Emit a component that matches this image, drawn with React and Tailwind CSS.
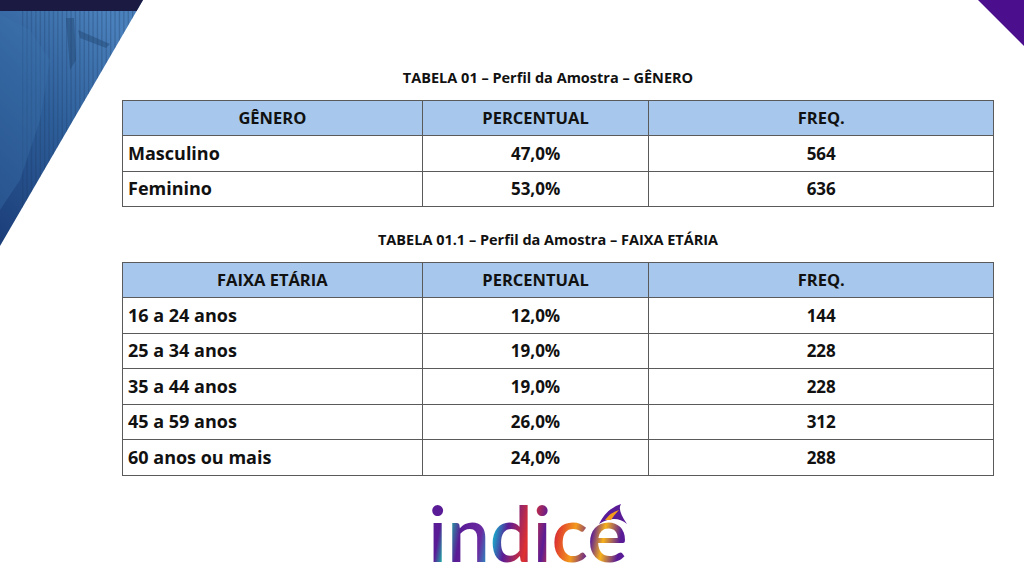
import React from "react";

const font = { fontFamily: '"Open Sans", "Noto Sans", sans-serif' };

function Table({ head, rows }) {
  return (
    <table className="w-[872px] border-collapse text-[#111]" style={font}>
      <colgroup>
        <col className="w-[300px]" />
        <col className="w-[227px]" />
        <col className="w-[345px]" />
      </colgroup>
      <thead>
        <tr className="bg-[#a7c8ec] h-[35px]">
          {head.map((h) => (
            <th key={h} className="border border-[#5a5a5a] text-[16.5px] font-bold text-center p-0">
              {h}
            </th>
          ))}
        </tr>
      </thead>
      <tbody>
        {rows.map((r) => (
          <tr key={r[0]} className="h-[35.5px]">
            <td className="border border-[#5a5a5a] text-[18px] font-bold pl-[5px] p-0">{r[0]}</td>
            <td className="border border-[#5a5a5a] text-[17px] font-bold text-center p-0">{r[1]}</td>
            <td className="border border-[#5a5a5a] text-[17px] font-bold text-center p-0">{r[2]}</td>
          </tr>
        ))}
      </tbody>
    </table>
  );
}

function LeftPhoto() {
  const stripes = [];
  for (let i = 0; i < 28; i++) {
    stripes.push(
      <rect key={i} x={22 + i * 4.4} y="10" width="1.3" height="240" fill="#1d3c66" opacity="0.3" />
    );
  }
  return (
    <svg className="absolute left-0 top-0" width="150" height="250" viewBox="0 0 150 250">
      <defs>
        <linearGradient id="pg" x1="0.6" y1="0" x2="0" y2="1">
          <stop offset="0" stopColor="#4a80bb" />
          <stop offset="0.45" stopColor="#2e5f9a" />
          <stop offset="1" stopColor="#1b3d78" />
        </linearGradient>
        <clipPath id="tri">
          <polygon points="0,0 143,0 0,246" />
        </clipPath>
      </defs>
      <g clipPath="url(#tri)">
        <rect x="0" y="0" width="150" height="250" fill="url(#pg)" />
        {stripes}
        <path d="M0 14 L30 30 L50 60 L40 120 L20 180 L0 210 Z" fill="#3d72ad" opacity="0.35" />
        <path d="M66 18 L74 18 L76 60 L70 70 Z" fill="#22446f" opacity="0.45" />
        <path d="M78 30 L110 44 L106 48 L80 38 Z" fill="#22446f" opacity="0.45" />
        <rect x="0" y="0" width="150" height="11" fill="#1b1a42" />
      </g>
    </svg>
  );
}

function Logo() {
  return (
    <div className="relative h-[70px] w-[210px] flex items-start justify-center">
      <span
        className="text-[76px] leading-[70px] font-semibold tracking-[0px] bg-clip-text text-transparent"
        style={{
          fontFamily: '"Lato", "Open Sans", sans-serif',
          backgroundImage:
            "linear-gradient(100deg, #5a1c96 0%, #5a1c96 8%, #1bb3a6 12%, #5a1c96 18%, #6a2aa0 28%, #1aa6c9 34%, #5a1c96 40%, #e0312f 50%, #5a1c96 58%, #e03a2f 64%, #f39a1c 72%, #5a1c96 80%, #f7b21a 86%, #5a1c96 94%)",
          WebkitBackgroundClip: "text",
        }}
      >
        indice
      </span>
      <svg className="absolute right-[2px] top-[4px]" width="34" height="26" viewBox="0 0 34 26">
        <path d="M2 22 Q10 6 24 2 Q20 8 30 22 Q18 12 2 22 Z" fill="#5a1c96" />
        <path d="M8 18 Q14 10 22 8 Q18 12 14 18 Z" fill="#f39a1c" />
      </svg>
    </div>
  );
}

export default function App() {
  return (
    <div className="relative w-[1024px] h-[572px] bg-white overflow-hidden" style={font}>
      <LeftPhoto />
      <svg className="absolute right-0 top-0" width="48" height="48" viewBox="0 0 48 48">
        <polygon points="2,0 48,0 48,46" fill="#4b0f8e" />
      </svg>
      <div className="ml-[122px] w-[872px] flex flex-col items-center pt-[68px]">
        <div className="text-[14.5px] font-bold text-[#111] leading-[20px] mr-[20px]">
          TABELA 01 – Perfil da Amostra – GÊNERO
        </div>
        <div className="mt-[12px]">
          <Table
            head={["GÊNERO", "PERCENTUAL", "FREQ."]}
            rows={[
              ["Masculino", "47,0%", "564"],
              ["Feminino", "53,0%", "636"],
            ]}
          />
        </div>
        <div className="mt-[23px] text-[14.5px] font-bold text-[#111] leading-[20px] mr-[20px]">
          TABELA 01.1 – Perfil da Amostra – FAIXA ETÁRIA
        </div>
        <div className="mt-[12px]">
          <Table
            head={["FAIXA ETÁRIA", "PERCENTUAL", "FREQ."]}
            rows={[
              ["16 a 24 anos", "12,0%", "144"],
              ["25 a 34 anos", "19,0%", "228"],
              ["35 a 44 anos", "19,0%", "228"],
              ["45 a 59 anos", "26,0%", "312"],
              ["60 anos ou mais", "24,0%", "288"],
            ]}
          />
        </div>
        <div className="mt-[22px] mr-[60px]">
          <Logo />
        </div>
      </div>
    </div>
  );
}
